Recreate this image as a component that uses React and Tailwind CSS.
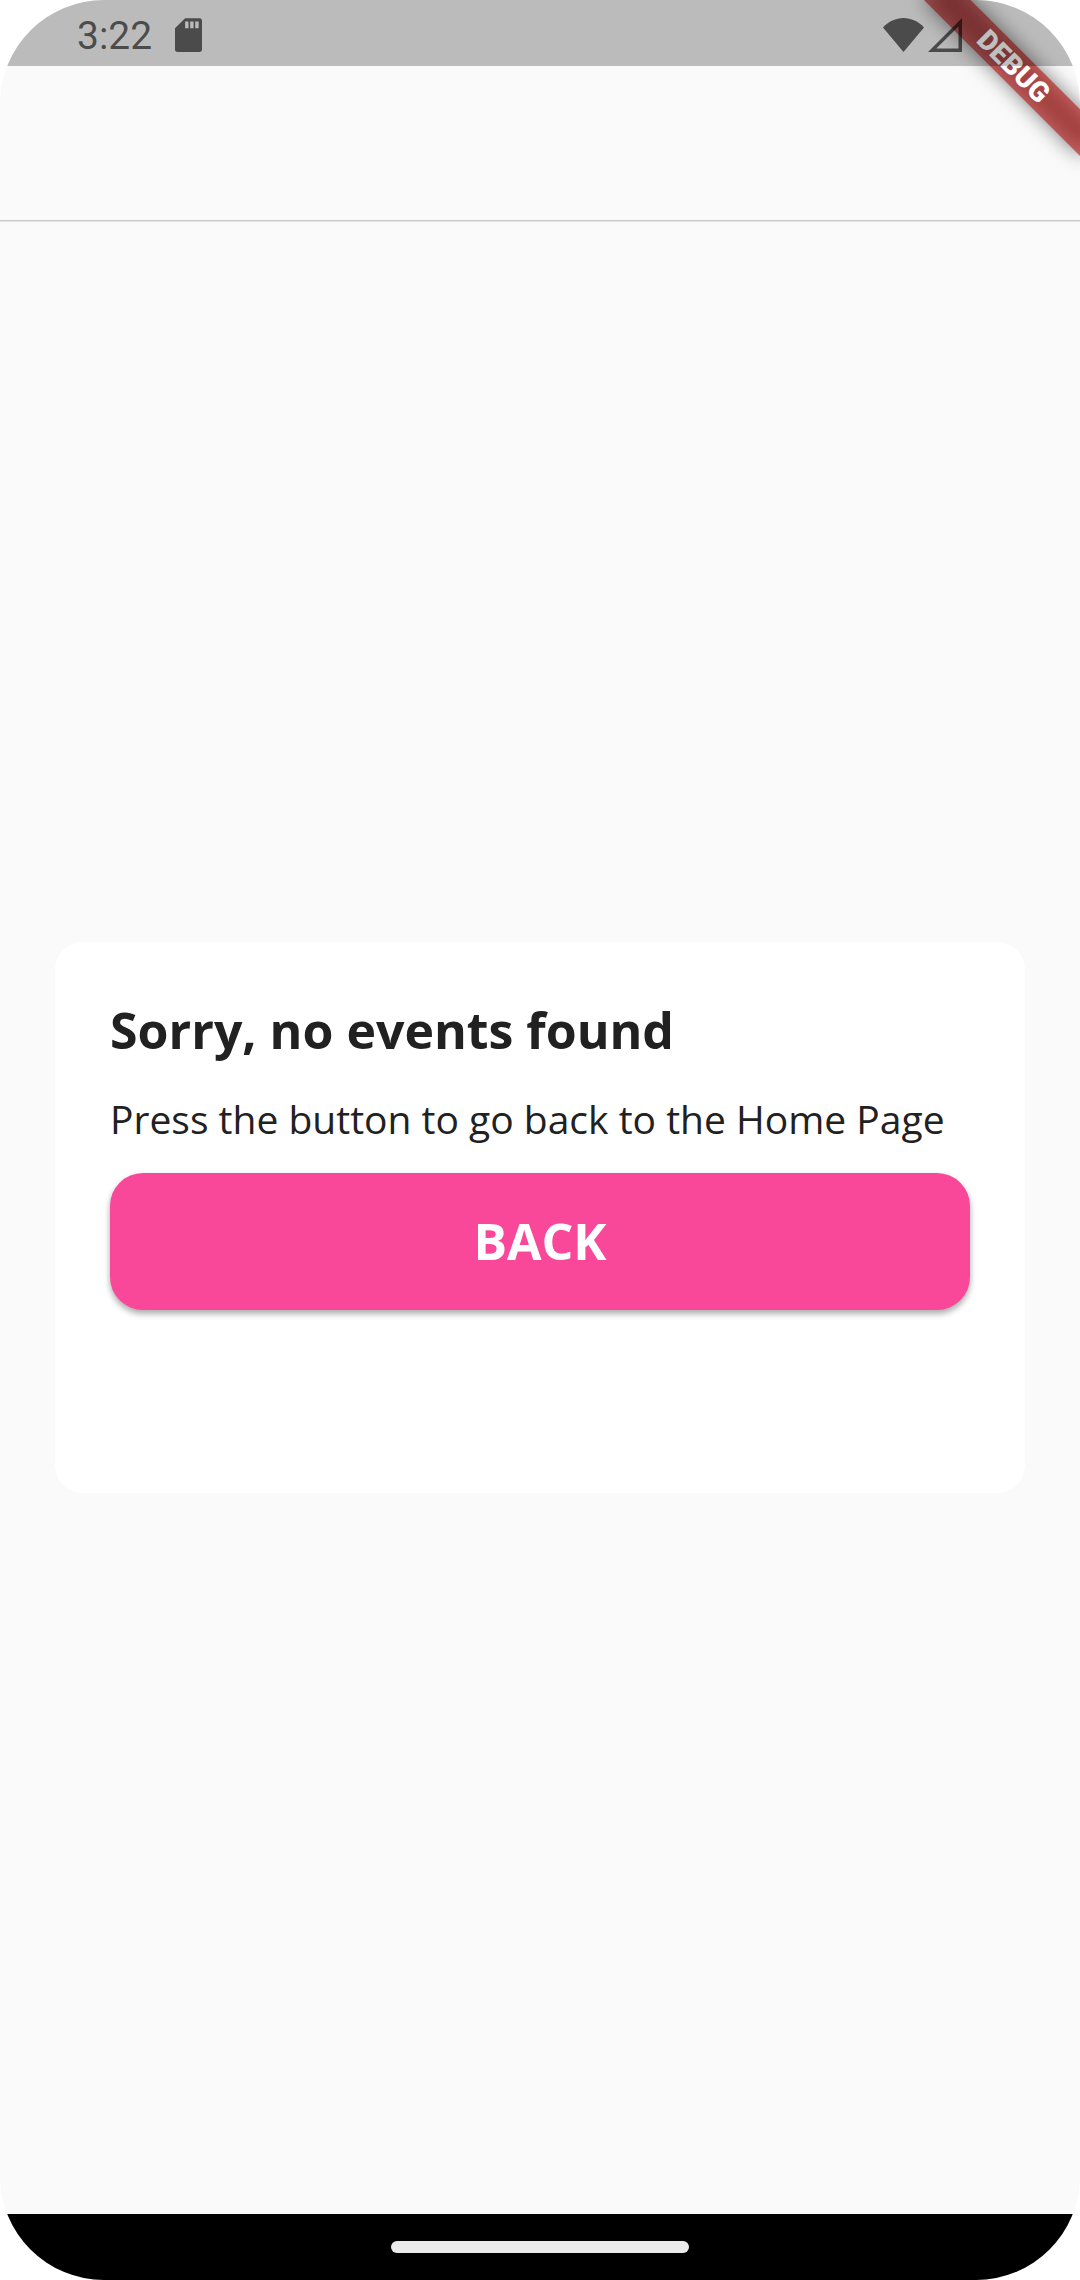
function SdCardIcon() {
  return (
    <svg viewBox="4 2 16 20" className="h-[34px] w-[27px]" fill="currentColor" aria-hidden="true">
      <path d="M18.6 2H10L4 8v12.6c0 .8.6 1.4 1.4 1.4h13.2c.8 0 1.4-.6 1.4-1.4V3.4c0-.8-.6-1.4-1.4-1.4zM12 8h-2V4h2v4zm3 0h-2V4h2v4zm3 0h-2V4h2v4z" />
    </svg>
  );
}

function WifiIcon() {
  return (
    <svg viewBox="0 0 41 34" className="h-[34px] w-[41px]" fill="currentColor" aria-hidden="true">
      <path d="M20.5 34 0 9.4C5.4 3.5 13 0 20.5 0S35.6 3.5 41 9.4z" />
    </svg>
  );
}

function SignalIcon() {
  return (
    <svg viewBox="0 0 34 34" className="h-[34px] w-[34px]" fill="currentColor" aria-hidden="true">
      <path fillRule="evenodd" d="M34 0v34H0zM30.5 8.500 8.300 30.500h22.200z" />
    </svg>
  );
}

function StatusBar() {
  return (
    <div className="relative z-20 flex h-[66px] items-center justify-between bg-black/25 pt-1 pr-[118px] pl-[77px] text-black/60">
      <div className="flex items-center gap-[23px]">
        <span className="pt-0.5 font-['Roboto',sans-serif] text-[39px] leading-none">3:22</span>
        <SdCardIcon />
      </div>
      <div className="flex items-center gap-1">
        <WifiIcon />
        <SignalIcon />
      </div>
    </div>
  );
}

function DebugBanner() {
  return (
    <div className="absolute -top-[44px] -right-[44px] z-10 flex h-[220px] w-[220px] rotate-45 items-center justify-center">
      <div className="relative h-[33px] w-full shrink-0">
        <div className="absolute inset-0 bg-black/50 blur-[10px]" />
        <div className="relative h-full bg-[#b71c1c]/63 text-center font-['Roboto',sans-serif] text-[28px] leading-[33px] font-black text-white">
          DEBUG
        </div>
      </div>
    </div>
  );
}

export default function App() {
  return (
    <div className="min-h-screen bg-white font-['Open_Sans',sans-serif] text-[#212121]">
      <div className="relative flex min-h-screen flex-col overflow-hidden rounded-[104px] bg-[#fafafa]">
        <DebugBanner />
        <StatusBar />
        <header className="h-[155px] border-b border-[#cacaca] shadow-[0_1px_0_#e4e4e4]" />

        <main className="flex grow flex-col justify-center px-[55px]">
          <section className="min-h-[551px] rounded-[28px] bg-white px-[55px] pt-[54px]">
            <h1 className="text-[50px] leading-[68px] font-bold">Sorry, no events found</h1>
            <p className="mt-7 text-[39px] leading-[54px]">Press the button to go back to the Home Page</p>
            <button
              type="button"
              className="mt-[27px] block h-[137px] w-full rounded-[33px] bg-[#f94899] text-[50px] font-bold text-white shadow-[0_4px_6px_rgba(0,0,0,0.28),0_2px_6px_rgba(0,0,0,0.08)]"
            >
              BACK
            </button>
          </section>
        </main>

        <nav className="flex h-[66px] items-center justify-center bg-black">
          <div className="h-3 w-[298px] rounded-full bg-[#ebebeb]" />
        </nav>
      </div>
    </div>
  );
}
